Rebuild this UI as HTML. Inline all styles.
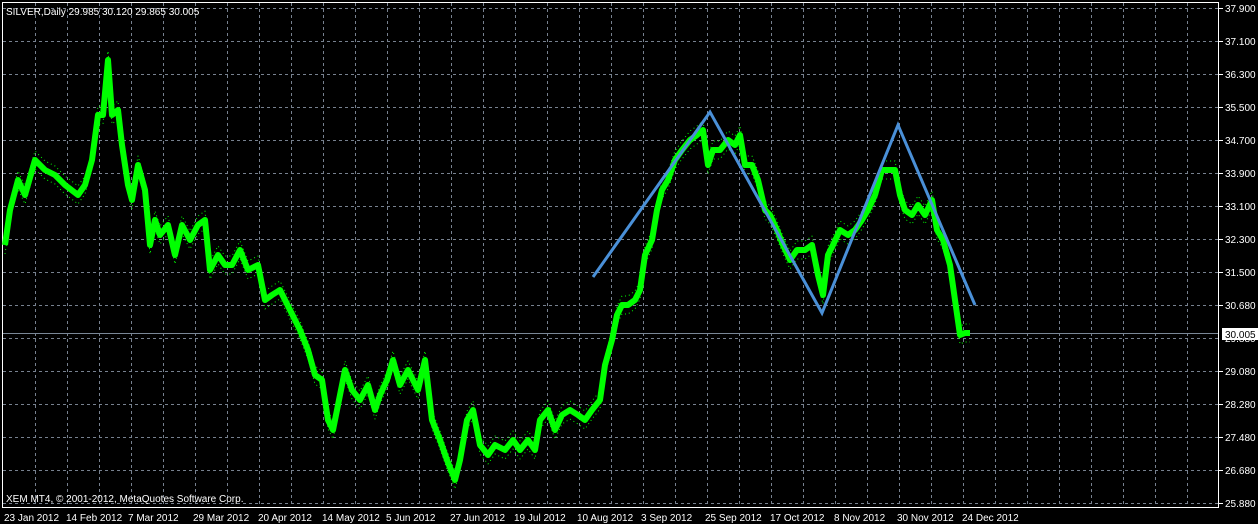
<!DOCTYPE html>
<html><head><meta charset="utf-8"><style>
html,body{margin:0;padding:0;background:#000;width:1258px;height:524px;overflow:hidden}
svg{display:block}
text{font-family:"Liberation Sans",sans-serif;font-size:10px;fill:#fff}
</style></head><body>
<svg width="1258" height="524" viewBox="0 0 1258 524">
<rect width="1258" height="524" fill="#000"/>
<g stroke="#77818f" stroke-width="1" stroke-dasharray="3,3">
<line x1="3" y1="8.5" x2="1219" y2="8.5"/><line x1="3" y1="41.5" x2="1219" y2="41.5"/><line x1="3" y1="74.5" x2="1219" y2="74.5"/><line x1="3" y1="107.5" x2="1219" y2="107.5"/><line x1="3" y1="140.5" x2="1219" y2="140.5"/><line x1="3" y1="173.5" x2="1219" y2="173.5"/><line x1="3" y1="206.5" x2="1219" y2="206.5"/><line x1="3" y1="239.5" x2="1219" y2="239.5"/><line x1="3" y1="272.5" x2="1219" y2="272.5"/><line x1="3" y1="305.5" x2="1219" y2="305.5"/><line x1="3" y1="338.5" x2="1219" y2="338.5"/><line x1="3" y1="371.5" x2="1219" y2="371.5"/><line x1="3" y1="404.5" x2="1219" y2="404.5"/><line x1="3" y1="437.5" x2="1219" y2="437.5"/><line x1="3" y1="470.5" x2="1219" y2="470.5"/><line x1="3" y1="503.5" x2="1219" y2="503.5"/>
</g>
<g stroke="#77818f" stroke-width="1" stroke-dasharray="3,3">
<line x1="35.5" y1="3" x2="35.5" y2="507"/><line x1="67.5" y1="3" x2="67.5" y2="507"/><line x1="99.5" y1="3" x2="99.5" y2="507"/><line x1="131.5" y1="3" x2="131.5" y2="507"/><line x1="163.5" y1="3" x2="163.5" y2="507"/><line x1="195.5" y1="3" x2="195.5" y2="507"/><line x1="227.5" y1="3" x2="227.5" y2="507"/><line x1="259.5" y1="3" x2="259.5" y2="507"/><line x1="291.5" y1="3" x2="291.5" y2="507"/><line x1="323.5" y1="3" x2="323.5" y2="507"/><line x1="355.5" y1="3" x2="355.5" y2="507"/><line x1="387.5" y1="3" x2="387.5" y2="507"/><line x1="419.5" y1="3" x2="419.5" y2="507"/><line x1="451.5" y1="3" x2="451.5" y2="507"/><line x1="483.5" y1="3" x2="483.5" y2="507"/><line x1="515.5" y1="3" x2="515.5" y2="507"/><line x1="547.5" y1="3" x2="547.5" y2="507"/><line x1="579.5" y1="3" x2="579.5" y2="507"/><line x1="611.5" y1="3" x2="611.5" y2="507"/><line x1="643.5" y1="3" x2="643.5" y2="507"/><line x1="675.5" y1="3" x2="675.5" y2="507"/><line x1="707.5" y1="3" x2="707.5" y2="507"/><line x1="739.5" y1="3" x2="739.5" y2="507"/><line x1="771.5" y1="3" x2="771.5" y2="507"/><line x1="803.5" y1="3" x2="803.5" y2="507"/><line x1="835.5" y1="3" x2="835.5" y2="507"/><line x1="867.5" y1="3" x2="867.5" y2="507"/><line x1="899.5" y1="3" x2="899.5" y2="507"/><line x1="931.5" y1="3" x2="931.5" y2="507"/><line x1="963.5" y1="3" x2="963.5" y2="507"/><line x1="995.5" y1="3" x2="995.5" y2="507"/><line x1="1027.5" y1="3" x2="1027.5" y2="507"/><line x1="1059.5" y1="3" x2="1059.5" y2="507"/><line x1="1091.5" y1="3" x2="1091.5" y2="507"/><line x1="1123.5" y1="3" x2="1123.5" y2="507"/><line x1="1155.5" y1="3" x2="1155.5" y2="507"/><line x1="1187.5" y1="3" x2="1187.5" y2="507"/>
</g>
<line x1="3" y1="333.5" x2="1219" y2="333.5" stroke="#7a8796" stroke-width="1"/>
<rect x="2.5" y="2.5" width="1216" height="505" fill="none" stroke="#fff" stroke-width="1"/>
<g fill="none" stroke="#00ff00" stroke-linejoin="round">
<polyline stroke-width="1" stroke-dasharray="1,3" transform="translate(0,-9)" points="5,245 10,210 18,180 25,195 35,160 45,170 55,175 65,185 78,195 85,185 92,160 98,115 103,115 108,60 112,115 118,110 122,145 128,185 132,200 138,165 145,190 150,245 155,220 160,235 168,225 175,255 182,225 190,240 198,225 205,220 210,270 218,255 225,265 232,265 240,250 248,270 258,265 265,300 272,295 280,290 290,310 300,330 308,350 315,375 322,380 328,420 333,430 340,395 345,370 352,390 360,400 368,385 375,410 380,395 387,380 393,360 400,385 408,370 418,390 425,360 432,420 440,440 447,460 455,480 460,460 467,420 473,410 480,445 488,455 495,445 505,450 513,440 520,450 528,440 535,450 540,420 548,410 555,430 562,415 570,410 578,415 585,420 592,410 600,400 605,365 612,340 617,315 622,305 628,305 635,300 640,290 645,255 652,240 657,210 662,190 668,180 675,160 682,150 690,140 697,135 703,130 708,165 713,150 720,150 728,140 735,145 740,135 745,165 752,165 758,180 765,210 770,215 777,230 783,245 790,260 797,250 805,250 812,245 818,275 823,295 828,255 833,245 840,230 848,235 855,230 862,220 868,210 875,195 882,170 888,170 895,170 900,195 905,210 912,215 918,205 925,215 932,200 937,230 943,240 950,265 955,300 960,335 965,333 970,333"/>
<polyline stroke-width="1" stroke-dasharray="1,3" transform="translate(0,9)" points="5,245 10,210 18,180 25,195 35,160 45,170 55,175 65,185 78,195 85,185 92,160 98,115 103,115 108,60 112,115 118,110 122,145 128,185 132,200 138,165 145,190 150,245 155,220 160,235 168,225 175,255 182,225 190,240 198,225 205,220 210,270 218,255 225,265 232,265 240,250 248,270 258,265 265,300 272,295 280,290 290,310 300,330 308,350 315,375 322,380 328,420 333,430 340,395 345,370 352,390 360,400 368,385 375,410 380,395 387,380 393,360 400,385 408,370 418,390 425,360 432,420 440,440 447,460 455,480 460,460 467,420 473,410 480,445 488,455 495,445 505,450 513,440 520,450 528,440 535,450 540,420 548,410 555,430 562,415 570,410 578,415 585,420 592,410 600,400 605,365 612,340 617,315 622,305 628,305 635,300 640,290 645,255 652,240 657,210 662,190 668,180 675,160 682,150 690,140 697,135 703,130 708,165 713,150 720,150 728,140 735,145 740,135 745,165 752,165 758,180 765,210 770,215 777,230 783,245 790,260 797,250 805,250 812,245 818,275 823,295 828,255 833,245 840,230 848,235 855,230 862,220 868,210 875,195 882,170 888,170 895,170 900,195 905,210 912,215 918,205 925,215 932,200 937,230 943,240 950,265 955,300 960,335 965,333 970,333"/>
<polyline stroke-width="6" points="5,245 10,210 18,180 25,195 35,160 45,170 55,175 65,185 78,195 85,185 92,160 98,115 103,115 108,60 112,115 118,110 122,145 128,185 132,200 138,165 145,190 150,245 155,220 160,235 168,225 175,255 182,225 190,240 198,225 205,220 210,270 218,255 225,265 232,265 240,250 248,270 258,265 265,300 272,295 280,290 290,310 300,330 308,350 315,375 322,380 328,420 333,430 340,395 345,370 352,390 360,400 368,385 375,410 380,395 387,380 393,360 400,385 408,370 418,390 425,360 432,420 440,440 447,460 455,480 460,460 467,420 473,410 480,445 488,455 495,445 505,450 513,440 520,450 528,440 535,450 540,420 548,410 555,430 562,415 570,410 578,415 585,420 592,410 600,400 605,365 612,340 617,315 622,305 628,305 635,300 640,290 645,255 652,240 657,210 662,190 668,180 675,160 682,150 690,140 697,135 703,130 708,165 713,150 720,150 728,140 735,145 740,135 745,165 752,165 758,180 765,210 770,215 777,230 783,245 790,260 797,250 805,250 812,245 818,275 823,295 828,255 833,245 840,230 848,235 855,230 862,220 868,210 875,195 882,170 888,170 895,170 900,195 905,210 912,215 918,205 925,215 932,200 937,230 943,240 950,265 955,300 960,335 965,333 970,333"/>
</g>
<polyline fill="none" stroke="#4a90d8" stroke-width="3" points="593,277 710,112 822,313 898,125 975,305"/>
<text x="6" y="15">SILVER,Daily  29.985 30.120 29.865 30.005</text>
<text x="6" y="502">XEM MT4, © 2001-2012, MetaQuotes Software Corp.</text>
<g stroke="#fff"><line x1="1219" y1="8.5" x2="1223" y2="8.5"/><line x1="1219" y1="41.5" x2="1223" y2="41.5"/><line x1="1219" y1="74.5" x2="1223" y2="74.5"/><line x1="1219" y1="107.5" x2="1223" y2="107.5"/><line x1="1219" y1="140.5" x2="1223" y2="140.5"/><line x1="1219" y1="173.5" x2="1223" y2="173.5"/><line x1="1219" y1="206.5" x2="1223" y2="206.5"/><line x1="1219" y1="239.5" x2="1223" y2="239.5"/><line x1="1219" y1="272.5" x2="1223" y2="272.5"/><line x1="1219" y1="305.5" x2="1223" y2="305.5"/><line x1="1219" y1="371.5" x2="1223" y2="371.5"/><line x1="1219" y1="404.5" x2="1223" y2="404.5"/><line x1="1219" y1="437.5" x2="1223" y2="437.5"/><line x1="1219" y1="470.5" x2="1223" y2="470.5"/><line x1="1219" y1="503.5" x2="1223" y2="503.5"/></g>
<g>
<text x="1225" y="12">37.900</text><text x="1225" y="45">37.100</text><text x="1225" y="78">36.300</text><text x="1225" y="111">35.500</text><text x="1225" y="144">34.700</text><text x="1225" y="177">33.900</text><text x="1225" y="210">33.100</text><text x="1225" y="243">32.300</text><text x="1225" y="276">31.500</text><text x="1225" y="309">30.680</text><text x="1225" y="342">29.880</text><text x="1225" y="375">29.080</text><text x="1225" y="408">28.280</text><text x="1225" y="441">27.480</text><text x="1225" y="474">26.680</text><text x="1225" y="507">25.880</text>
</g>
<rect x="1222" y="328" width="36" height="12" fill="#fff"/>
<text x="1225" y="338" style="fill:#000">30.005</text>
<g>
<text x="4" y="521">23 Jan 2012</text><text x="66" y="521">14 Feb 2012</text><text x="128" y="521">7 Mar 2012</text><text x="193" y="521">29 Mar 2012</text><text x="258" y="521">20 Apr 2012</text><text x="322" y="521">14 May 2012</text><text x="386" y="521">5 Jun 2012</text><text x="450" y="521">27 Jun 2012</text><text x="514" y="521">19 Jul 2012</text><text x="577" y="521">10 Aug 2012</text><text x="641" y="521">3 Sep 2012</text><text x="705" y="521">25 Sep 2012</text><text x="770" y="521">17 Oct 2012</text><text x="834" y="521">8 Nov 2012</text><text x="897" y="521">30 Nov 2012</text><text x="962" y="521">24 Dec 2012</text>
</g>
</svg>
</body></html>
